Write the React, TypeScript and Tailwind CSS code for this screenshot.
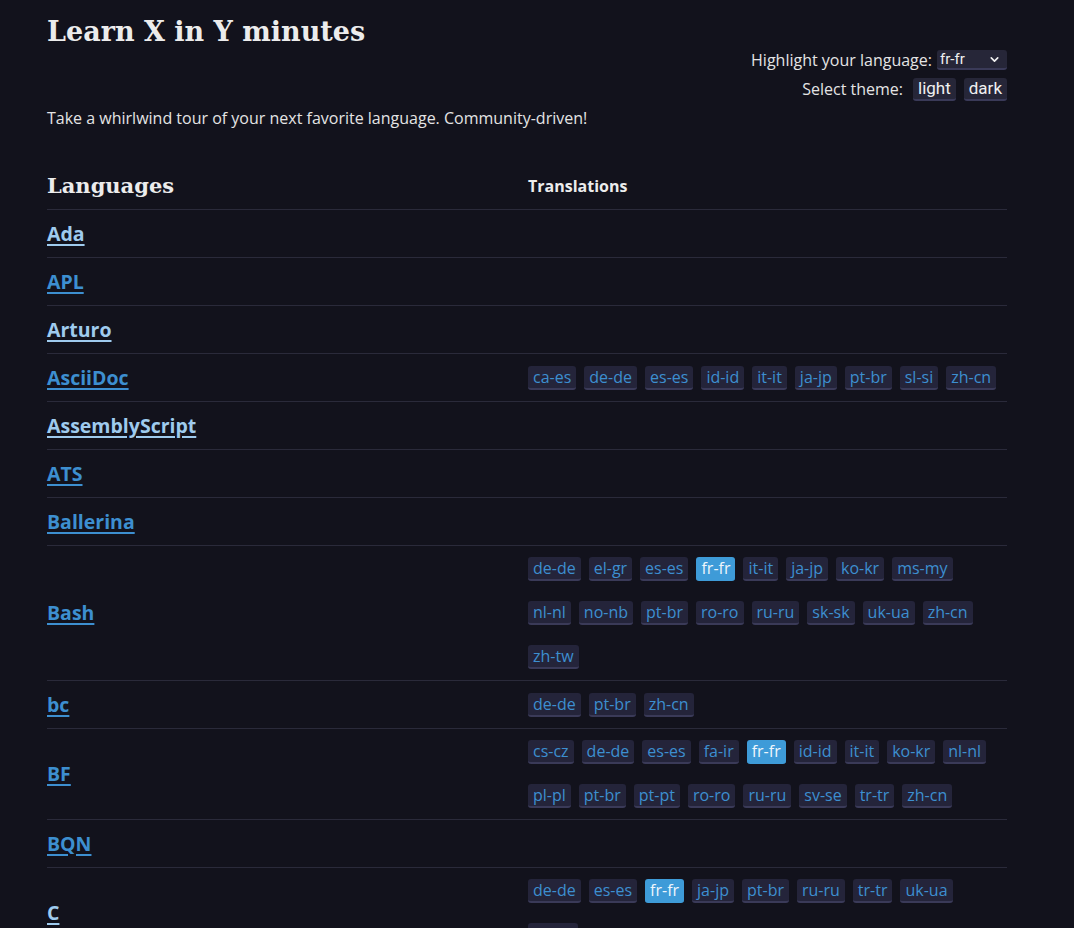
import { ChevronDown } from "lucide-react";

type Lang = { name: string; visited?: boolean; tr: string[] };

const langs: Lang[] = [
  { name: "Ada", visited: true, tr: [] },
  { name: "APL", tr: [] },
  { name: "Arturo", visited: true, tr: [] },
  { name: "AsciiDoc", tr: ["ca-es", "de-de", "es-es", "id-id", "it-it", "ja-jp", "pt-br", "sl-si", "zh-cn"] },
  { name: "AssemblyScript", visited: true, tr: [] },
  { name: "ATS", tr: [] },
  { name: "Ballerina", tr: [] },
  {
    name: "Bash",
    tr: ["de-de", "el-gr", "es-es", "fr-fr", "it-it", "ja-jp", "ko-kr", "ms-my", "nl-nl", "no-nb", "pt-br", "ro-ro", "ru-ru", "sk-sk", "uk-ua", "zh-cn", "zh-tw"],
  },
  { name: "bc", tr: ["de-de", "pt-br", "zh-cn"] },
  {
    name: "BF",
    tr: ["cs-cz", "de-de", "es-es", "fa-ir", "fr-fr", "id-id", "it-it", "ko-kr", "nl-nl", "pl-pl", "pt-br", "pt-pt", "ro-ro", "ru-ru", "sv-se", "tr-tr", "zh-cn"],
  },
  { name: "BQN", tr: [] },
  { name: "C", visited: true, tr: ["de-de", "es-es", "fr-fr", "ja-jp", "pt-br", "ru-ru", "tr-tr", "uk-ua", "zh-cn"] },
];

const highlight = "fr-fr";

const Tag = ({ code }: { code: string }) => {
  const on = code === highlight;
  return (
    <a
      className={`mr-2 my-[10px] h-[24px] px-[5px] rounded-[3px] border-b-2 text-[16px] leading-[22px] ${
        on ? "bg-[#3e9bd8] border-[#3e9bd8] text-[#eef6fc]" : "bg-[#24243a] border-[#3a3a58] text-[#3d8fd0]"
      }`}
    >
      {code}
    </a>
  );
};

export default function App() {
  return (
    <div className="min-h-screen bg-[#12121c] text-[#e4e4e4] font-['Open_Sans',sans-serif]">
      <div className="ml-[47px] w-[960px] pt-[14px]">
        {/* header */}
        <h1 className="font-['DejaVu_Serif',serif] font-bold text-[27px] leading-[36px] text-[#ececec]">
          Learn X in Y minutes
        </h1>
        <div className="flex flex-col items-end text-[16px]">
          <div className="flex items-center h-[20px]">
            <span>Highlight your language:</span>
            <div className="ml-[5px] w-[70px] h-[20px] flex items-center justify-between pl-[3px] pr-[6px] bg-[#262638] border-b-2 border-[#3a3a58] rounded-[3px] font-['Roboto',sans-serif] text-[15px] text-[#f0f0f0]">
              <span>fr-fr</span>
              <ChevronDown size={13} strokeWidth={3} />
            </div>
          </div>
          <div className="flex items-center h-[22px] mt-[8px]">
            <span>Select theme:</span>
            <button className="ml-[10px] h-[23px] px-[5px] bg-[#262638] border-b-2 border-[#3a3a58] rounded-[3px] font-['Roboto',sans-serif] text-[17px] leading-[21px] text-[#f0f0f0]">
              light
            </button>
            <button className="ml-[8px] h-[23px] px-[5px] bg-[#262638] border-b-2 border-[#3a3a58] rounded-[3px] font-['Roboto',sans-serif] text-[17px] leading-[21px] text-[#f0f0f0]">
              dark
            </button>
          </div>
        </div>
        <p className="mt-[6px] text-[16px] leading-6">Take a whirlwind tour of your next favorite language. Community-driven!</p>

        {/* table */}
        <div className="mt-[32px]">
          <div className="flex items-center h-[48px] border-b border-[#2a2a3a]">
            <div className="w-[481px] font-['DejaVu_Serif',serif] font-bold text-[21px] text-[#ececec]">Languages</div>
            <div className="font-bold text-[16px] text-[#ececec]">Translations</div>
          </div>
          {langs.map((l) => (
            <div key={l.name} className="flex min-h-[48px] border-b border-[#2a2a3a]">
              <div className="w-[481px] flex items-center">
                <a
                  className={`font-bold text-[19.5px] leading-[28px] underline decoration-2 underline-offset-[3px] ${
                    l.visited ? "text-[#9fcbee]" : "text-[#3d8fd0]"
                  }`}
                >
                  {l.name}
                </a>
              </div>
              <div className="flex-1 flex flex-wrap content-center py-px">
                {l.tr.map((t) => (
                  <Tag key={t} code={t} />
                ))}
              </div>
            </div>
          ))}
        </div>
      </div>
    </div>
  );
}
